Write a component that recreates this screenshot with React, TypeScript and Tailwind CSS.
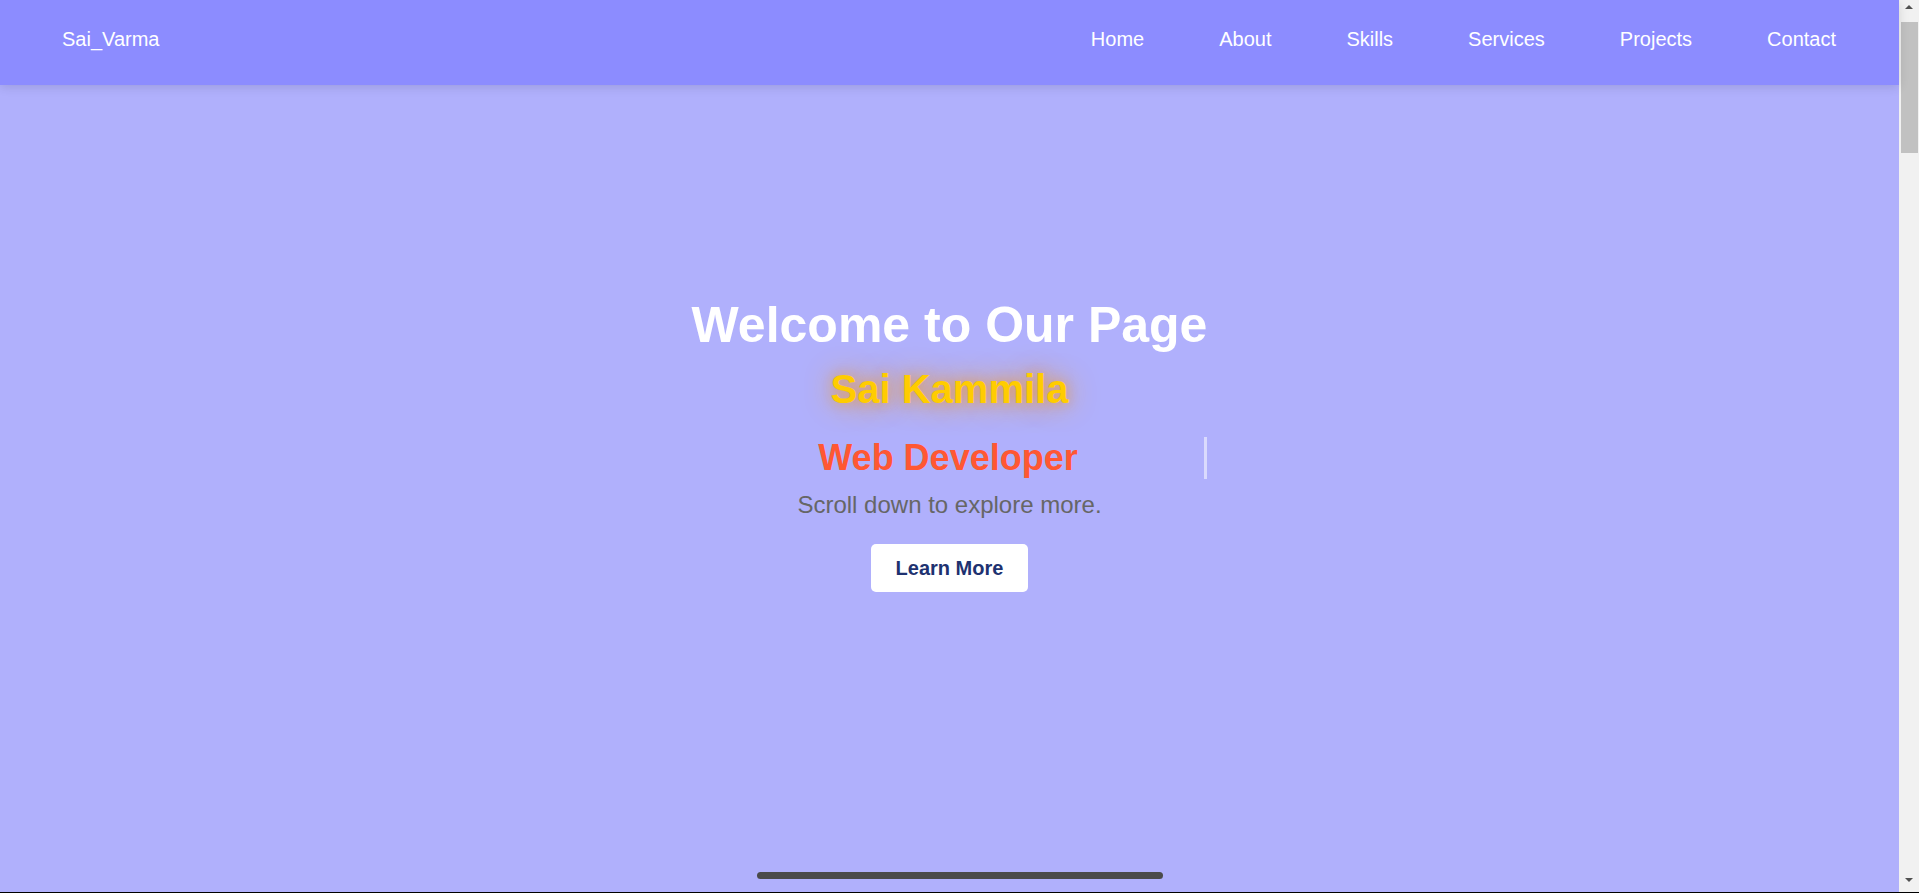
export default function App() {
  const links = ["Home", "About", "Skills", "Services", "Projects", "Contact"];
  return (
    <div className="flex h-[893px] w-[1919px] flex-col overflow-hidden font-['Liberation_Sans',Arial,sans-serif]">
      <div className="flex h-[892px] flex-row">
        <div className="flex w-[1899px] flex-col bg-[#b0b0fc]">
          <nav className="relative z-10 flex h-[85px] shrink-0 items-start justify-between bg-[#8c8cff] pl-[62px] pr-[63px] pt-[28px] text-[20px] leading-[23px] text-white shadow-[0_2px_10px_rgba(0,0,0,0.12)]">
            <div>Sai_Varma</div>
            <ul className="flex gap-[75px]">
              {links.map((l) => (
                <li key={l}>{l}</li>
              ))}
            </ul>
          </nav>
          <main className="flex flex-1 flex-col items-center pt-[211px]">
            <h1 className="text-[50px] font-bold leading-[58px] text-white">Welcome to Our Page</h1>
            <h2 className="mt-[12px] text-[40px] font-bold leading-[46px] text-[#ffcc00] [text-shadow:0_0_12px_rgba(255,140,0,0.45),0_0_30px_rgba(255,160,0,0.85)]">
              Sai Kammila
            </h2>
            <h3 className="mt-[25px] w-[515px] border-r-[3px] border-[#dadafd] text-center text-[36px] font-bold leading-[42px] text-[#ff5733]">
              Web Developer
            </h3>
            <p className="mt-[12px] text-[24px] leading-[28px] text-[#666666]">Scroll down to explore more.</p>
            <button className="mt-[25px] flex h-[48px] w-[157px] items-center justify-center rounded-[5px] bg-white text-[20px] font-bold leading-[23px] text-[#1e3270]">
              Learn More
            </button>
            <div className="mb-[13px] ml-[757px] mt-auto h-[7px] w-[406px] self-start rounded-full bg-[#4a4a4a]" />
          </main>
        </div>
        <div className="flex w-[20px] flex-col items-center bg-[#f1f1f1]">
          <div className="mt-[5px] h-0 w-0 border-x-[4px] border-b-[4px] border-x-transparent border-b-[#505050]" />
          <div className="ml-[2px] mt-[13px] h-[131px] w-[17px] self-start bg-[#c1c1c1]" />
          <div className="mb-[10px] mt-auto h-0 w-0 border-x-[4px] border-t-[4px] border-x-transparent border-t-[#505050]" />
        </div>
      </div>
      <div className="h-px bg-black" />
    </div>
  );
}
